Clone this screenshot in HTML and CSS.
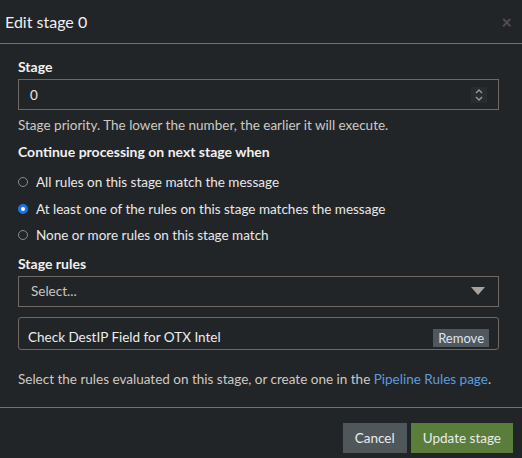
FILE: index.html
```html
<!DOCTYPE html>
<html>
<head>
<meta charset="utf-8">
<link rel="stylesheet" href="styles.css">
</head>
<body>
<div class="modal">
  <div class="modal-header">
    <h4 class="modal-title">Edit stage 0</h4>
    <span class="close">×</span>
  </div>
  <div class="modal-body">
    <div class="form-group">
      <label class="label">Stage</label>
      <div class="input">
        <span>0</span>
        <span class="spinner">
          <svg width="10" height="16" viewBox="0 0 10 16"><path d="M2 6 L5 3 L8 6" fill="none" stroke="#9a9a9a" stroke-width="1.4"/><path d="M2 10 L5 13 L8 10" fill="none" stroke="#9a9a9a" stroke-width="1.4"/></svg>
        </span>
      </div>
      <p class="help">Stage priority. The lower the number, the earlier it will execute.</p>
    </div>
    <div class="form-group group-radios">
      <label class="label">Continue processing on next stage when</label>
      <div class="radios">
        <div class="radio"><span class="dot"></span>All rules on this stage match the message</div>
        <div class="radio"><span class="dot checked"></span>At least one of the rules on this stage matches the message</div>
        <div class="radio"><span class="dot"></span>None or more rules on this stage match</div>
      </div>
    </div>
    <div class="form-group group-rules">
      <label class="label">Stage rules</label>
      <div class="select">
        <span class="placeholder">Select...</span>
        <span class="caret"></span>
      </div>
      <div class="rule">
        <span>Check DestIP Field for OTX Intel</span>
        <span class="remove">Remove</span>
      </div>
      <p class="help help-bottom">Select the rules evaluated on this stage, or create one in the <a class="link">Pipeline Rules page</a>.</p>
    </div>
  </div>
  <div class="modal-footer">
    <button class="btn btn-default">Cancel</button>
    <button class="btn btn-success">Update stage</button>
  </div>
</div>
</body>
</html>
```
FILE: styles.css
```css
html, body {
  margin: 0;
  padding: 0;
  background: #222528;
}
body {
  font-family: Lato, "Open Sans", sans-serif;
  color: #e6e6e6;
  font-size: 13.5px;
  width: 522px;
  height: 458px;
  overflow: hidden;
}
.modal {
  display: flex;
  flex-direction: column;
}
.modal-header {
  border-bottom: 1px solid #77716b;
  display: flex;
  align-items: center;
  justify-content: space-between;
  padding: 0 10px 0 5px;
  box-sizing: border-box;
  height: 44px;
}
.modal-title {
  margin: 0;
  font-size: 16px;
  font-weight: normal;
  color: #eef0f2;
}
.close {
  color: #4e5154;
  font-size: 18px;
  font-weight: bold;
}
.modal-body {
  padding: 14px 23px 0 18px;
}
.label {
  display: block;
  font-weight: bold;
  font-size: 14px;
  color: #f0f0f0;
  line-height: 18px;
}
.input {
  margin-top: 3px;
  height: 31px;
  box-sizing: border-box;
  border: 1px solid #6f6961;
  display: flex;
  align-items: center;
  justify-content: space-between;
  padding: 0 11px 0 11px;
  color: #e8e8e8;
}
.spinner {
  width: 16px;
  height: 16px;
  background: #2b2a33;
  display: flex;
  align-items: center;
  justify-content: center;
}
.help {
  margin: 6px 0 0;
  color: #cfc9c2;
  line-height: 18px;
}
.group-radios {
  margin-top: 9px;
}
.group-rules {
  margin-top: 6px;
}
.radios {
  margin-top: 8px;
}
.radio {
  display: flex;
  align-items: center;
  height: 26.5px;
  color: #e8e8e8;
}
.dot {
  width: 10px;
  height: 10px;
  border: 1px solid #8a8a8a;
  border-radius: 50%;
  margin-right: 8px;
  box-sizing: border-box;
  flex: none;
}
.dot.checked {
  border: 3px solid #1a73e8;
  background: #fff;
}
.select {
  margin-top: 3px;
  height: 31px;
  box-sizing: border-box;
  border: 1px solid #6f6961;
  display: flex;
  align-items: center;
  justify-content: space-between;
  padding: 0 13px 0 12px;
}
.placeholder {
  color: #c9c5c0;
}
.caret {
  width: 0;
  height: 0;
  border-left: 7px solid transparent;
  border-right: 7px solid transparent;
  border-top: 8px solid #a8a29c;
}
.rule {
  margin-top: 10px;
  height: 33px;
  box-sizing: border-box;
  border: 1px solid #6f6961;
  border-radius: 3px;
  display: flex;
  align-items: flex-end;
  justify-content: space-between;
  padding: 0 9px 2px 9px;
  color: #ececec;
}
.rule > span:first-child {
  padding-bottom: 2px;
}
.remove {
  background: #50575e;
  color: #dde6ee;
  font-size: 13px;
  padding: 1px 5px;
  line-height: 16px;
}
.help-bottom {
  margin-top: 20px;
}
.link {
  color: #5b9ddc;
}
.modal-footer {
  margin-top: 19px;
  border-top: 1px solid #77716b;
  display: flex;
  justify-content: flex-end;
  gap: 4px;
  padding: 15px 9px 0 0;
}
.btn {
  font-family: inherit;
  font-size: 13.5px;
  height: 30px;
  border: none;
  padding: 0 12px;
  color: #e8ecef;
}
.btn-default {
  background: #50575b;
}
.btn-success {
  background: #5a7d3c;
}
```
